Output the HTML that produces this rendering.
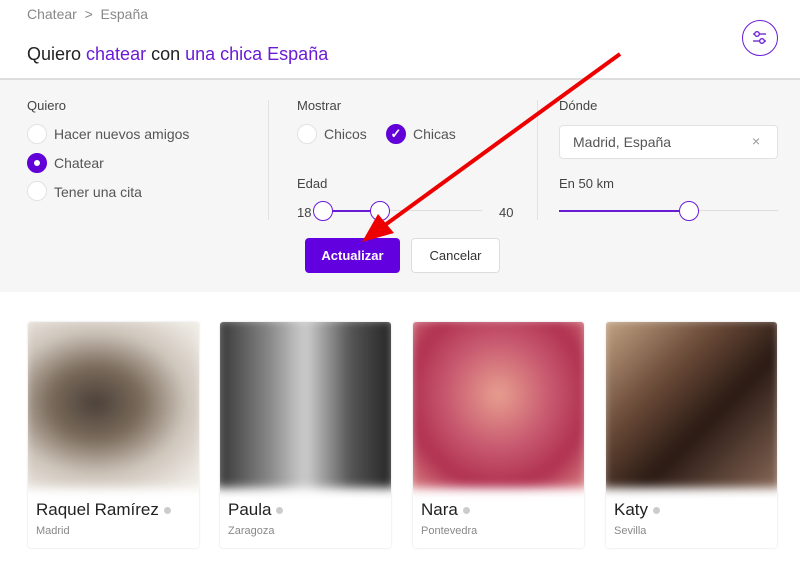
<!DOCTYPE html>
<html><head><meta charset="utf-8"><style>
*{margin:0;padding:0;box-sizing:border-box}
body{width:800px;height:561px;overflow:hidden;background:#fff;font-family:"Liberation Sans",sans-serif;position:relative;color:#333}
.abs{position:absolute}
.bc{left:27px;top:6px;font-size:14px;color:#888}
.title{left:27px;top:44px;font-size:18px;color:#222}
.title span{color:#6a1bd6}
.filt{left:742px;top:20px;width:36px;height:36px;border:1.5px solid #6a1bd6;border-radius:50%}
.panel{left:0;top:78px;width:800px;height:214px;background:#f6f6f6;border-top:2px solid #ddd}
.lbl{font-size:13px;color:#444}
.opt{font-size:14px;color:#555}
.rad{width:20px;height:20px;border-radius:50%;background:#fff;border:1px solid #e2e2e2}
.on{background:#6200d8;border-color:#6200d8}
.vline{width:1px;background:#e2e2e2;top:100px;height:120px}
.knob{width:20px;height:20px;border-radius:50%;background:#fff;border:1.5px solid #6a1bd6}
.card{top:322px;width:171px;height:226px;border-radius:3px;background:#fff;box-shadow:0 0 2px rgba(0,0,0,.15);overflow:hidden}
.ph{filter:blur(5px);margin:-4px;height:170px}
.nm{position:absolute;left:8px;top:178px;font-size:17px;color:#222}
.nm i{display:inline-block;width:7px;height:7px;border-radius:50%;background:#ccc;margin-left:5px;vertical-align:middle}
.ct{position:absolute;left:8px;top:203px;font-size:11px;color:#888}
</style></head><body>
<div class="abs bc">Chatear &nbsp;&gt;&nbsp; España</div>
<div class="abs title">Quiero <span>chatear</span> con <span>una chica España</span></div>
<div class="abs filt"><svg width="33" height="33" viewBox="0 0 33 33"><g stroke="#6a1bd6" stroke-width="1.3" fill="none"><line x1="10" y1="13" x2="23" y2="13"/><line x1="10" y1="20" x2="23" y2="20"/><circle cx="14" cy="13" r="2.3" fill="#fff"/><circle cx="19" cy="20" r="2.3" fill="#fff"/></g></svg></div>
<div class="abs panel"></div>
<div class="abs lbl" style="left:27px;top:98px">Quiero</div>
<div class="abs rad" style="left:27px;top:124px"></div><div class="abs opt" style="left:54px;top:126px">Hacer nuevos amigos</div>
<div class="abs rad on" style="left:27px;top:153px"><div style="width:6px;height:6px;background:#fff;border-radius:50%;margin:6px"></div></div><div class="abs opt" style="left:54px;top:155px">Chatear</div>
<div class="abs rad" style="left:27px;top:181px"></div><div class="abs opt" style="left:54px;top:184px">Tener una cita</div>
<div class="abs vline" style="left:268px"></div>
<div class="abs vline" style="left:537px"></div>
<div class="abs lbl" style="left:297px;top:98px">Mostrar</div>
<div class="abs rad" style="left:297px;top:124px"></div><div class="abs opt" style="left:324px;top:126px">Chicos</div>
<div class="abs rad on" style="left:386px;top:124px;color:#fff;font-size:13px;font-weight:bold;text-align:center;line-height:18px">✓</div><div class="abs opt" style="left:413px;top:126px">Chicas</div>
<div class="abs lbl" style="left:297px;top:176px">Edad</div>
<div class="abs lbl" style="left:297px;top:205px">18</div>
<div class="abs" style="left:322px;top:210px;width:160px;height:1px;background:#ddd"></div>
<div class="abs" style="left:322px;top:210px;width:58px;height:1.5px;background:#6a1bd6"></div>
<div class="abs knob" style="left:313px;top:201px"></div>
<div class="abs knob" style="left:370px;top:201px"></div>
<div class="abs lbl" style="left:499px;top:205px">40</div>
<div class="abs lbl" style="left:559px;top:98px">Dónde</div>
<div class="abs" style="left:559px;top:125px;width:219px;height:34px;background:#fff;border:1px solid #e2e2e2;border-radius:4px"></div>
<div class="abs opt" style="left:573px;top:134px">Madrid, España</div>
<div class="abs" style="left:752px;top:133px;color:#999;font-size:14px">×</div>
<div class="abs lbl" style="left:559px;top:176px">En 50 km</div>
<div class="abs" style="left:559px;top:210px;width:219px;height:1px;background:#ddd"></div>
<div class="abs" style="left:559px;top:210px;width:130px;height:1.5px;background:#6a1bd6"></div>
<div class="abs knob" style="left:679px;top:201px"></div>
<div class="abs" style="left:305px;top:238px;width:95px;height:35px;background:#6300e0;border-radius:4px;color:#fff;font-size:13px;font-weight:bold;text-align:center;line-height:35px">Actualizar</div>
<div class="abs" style="left:411px;top:238px;width:89px;height:35px;background:#fff;border:1px solid #ddd;border-radius:4px;color:#333;font-size:13px;text-align:center;line-height:33px">Cancelar</div>
<div class="abs card" style="left:28px"><div class="ph" style="background:radial-gradient(ellipse at 40% 50%,#4a4038 0%,#7a6a5a 30%,#cfc6bc 60%,#eeeae4 90%)"></div><div class="nm">Raquel Ramírez<i></i></div><div class="ct">Madrid</div></div>
<div class="abs card" style="left:220px"><div class="ph" style="background:linear-gradient(90deg,#333 0%,#888 30%,#cfcfcf 50%,#555 75%,#222 100%)"></div><div class="nm">Paula<i></i></div><div class="ct">Zaragoza</div></div>
<div class="abs card" style="left:413px"><div class="ph" style="background:radial-gradient(ellipse at 50% 45%,#e8a090 0%,#c85a70 40%,#b03050 70%,#d88 100%)"></div><div class="nm">Nara<i></i></div><div class="ct">Pontevedra</div></div>
<div class="abs card" style="left:606px"><div class="ph" style="background:linear-gradient(135deg,#c8a888 0%,#6a4a38 35%,#2a1a14 60%,#8a6a58 100%)"></div><div class="nm">Katy<i></i></div><div class="ct">Sevilla</div></div>
<svg class="abs" style="left:0;top:0" width="800" height="561"><line x1="620" y1="54" x2="385" y2="225" stroke="#e00" stroke-width="4"/><polygon points="362,242 378,214 394,233" fill="#e00"/></svg>
</body></html>
